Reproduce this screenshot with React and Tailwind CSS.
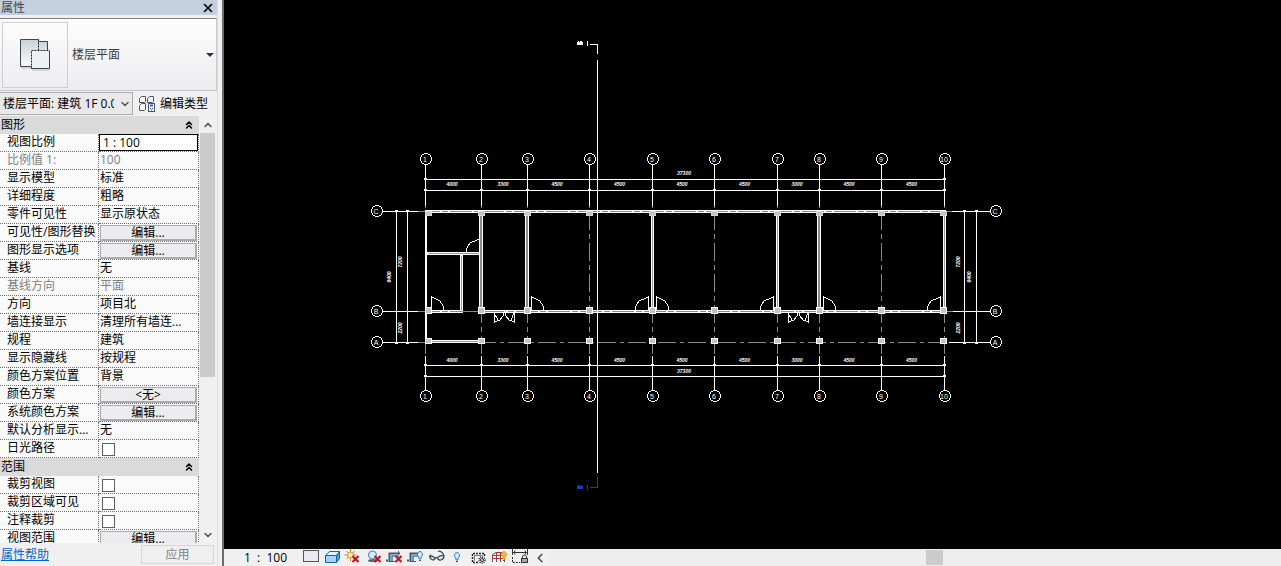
import { useState } from 'react';
import { ChevronDown, ChevronLeft, ChevronUp, ChevronsUp, X } from 'lucide-react';

const SECTIONS = [
  {
    title: '图形',
    rows: [
      { label: '视图比例', type: 'input', value: '1 : 100' },
      { label: '比例值 1:', value: '100', muted: true },
      { label: '显示模型', value: '标准' },
      { label: '详细程度', value: '粗略' },
      { label: '零件可见性', value: '显示原状态' },
      { label: '可见性/图形替换', type: 'button', value: '编辑...' },
      { label: '图形显示选项', type: 'button', value: '编辑...' },
      { label: '基线', value: '无' },
      { label: '基线方向', value: '平面', muted: true },
      { label: '方向', value: '项目北' },
      { label: '墙连接显示', value: '清理所有墙连...' },
      { label: '规程', value: '建筑' },
      { label: '显示隐藏线', value: '按规程' },
      { label: '颜色方案位置', value: '背景' },
      { label: '颜色方案', type: 'button', value: '<无>' },
      { label: '系统颜色方案', type: 'button', value: '编辑...' },
      { label: '默认分析显示...', value: '无' },
      { label: '日光路径', type: 'checkbox' },
    ],
  },
  {
    title: '范围',
    rows: [
      { label: '裁剪视图', type: 'checkbox' },
      { label: '裁剪区域可见', type: 'checkbox' },
      { label: '注释裁剪', type: 'checkbox' },
      { label: '视图范围', type: 'button', value: '编辑...' },
    ],
  },
];

// Vertical grid axes and the bay widths between them (mm)
const AXES = [425, 481, 527, 589, 652, 714, 777, 819, 881, 944];
const BAYS = ['4000', '3300', '4500', '4500', '4500', '4500', '3000', '4500', '4500'];

// Horizontal grid axes
const ROWS = [
  { name: 'C', y: 211 },
  { name: 'B', y: 311 },
  { name: 'A', y: 342 },
];

// Single doors: hinge x, bottom y, swing direction
const DOORS = [
  { x: 479, y: 252, dir: -1 },
  { x: 431, y: 310, dir: 1 },
  { x: 531, y: 310, dir: 1 },
  { x: 648, y: 310, dir: -1 },
  { x: 656, y: 310, dir: 1 },
  { x: 773, y: 310, dir: -1 },
  { x: 823, y: 310, dir: 1 },
  { x: 940, y: 310, dir: -1 },
];

const PropertyValue = ({ id, row }) => {
  const [checked, setChecked] = useState(false);
  const [text, setText] = useState(row.value || '');

  if (row.type === 'input') {
    return (
      <input
        id={id}
        type="text"
        value={text}
        onChange={(e) => setText(e.target.value)}
        className="block h-[17px] w-full border border-black bg-white px-[3px] outline-none"
      />
    );
  }
  if (row.type === 'button') {
    return (
      <button
        id={id}
        type="button"
        className="mx-px mt-px block h-4 w-[97px] border border-r-2 border-b-2 border-[#aaaab0] bg-[#ececee] text-center leading-[14px]"
      >
        {row.value}
      </button>
    );
  }
  if (row.type === 'checkbox') {
    return (
      <input
        id={id}
        type="checkbox"
        checked={checked}
        onChange={(e) => setChecked(e.target.checked)}
        className="mt-[3px] ml-[3px] block size-[13px] appearance-none border border-[#606060] bg-white checked:bg-[#606060]"
      />
    );
  }
  return <span className="pl-px">{row.value}</span>;
};

const PropertyTable = () => (
  <table className="w-[199px] table-fixed border-separate border-spacing-0 bg-[#fafafa]">
    <colgroup>
      <col className="w-[99px]" />
      <col />
    </colgroup>
    {SECTIONS.map((section) => (
      <tbody key={section.title}>
        <tr>
          <th colSpan={2} className="h-[18px] bg-[#dadada] p-0 text-left font-normal">
            <div className="flex h-[18px] items-center justify-between pr-1 pl-px">
              {section.title}
              <ChevronsUp size={12} strokeWidth={3} />
            </div>
          </th>
        </tr>
        {section.rows.map((row, i) => {
          const id = `${section.title}-${i}`;
          return (
            <tr key={id} className={row.muted ? 'text-[#808080]' : 'text-black'}>
              <td className="h-[18px] border-r border-b border-dotted border-[#707070] p-0 pl-[7px] align-top leading-4 whitespace-nowrap">
                <label htmlFor={row.type ? id : undefined}>{row.label}</label>
              </td>
              <td className="h-[18px] border-r border-b border-dotted border-[#707070] p-0 align-top leading-4 whitespace-nowrap">
                <PropertyValue id={id} row={row} />
              </td>
            </tr>
          );
        })}
      </tbody>
    ))}
  </table>
);

const FloorPlanIcon = () => (
  <svg width="66" height="66" viewBox="1 1 66 66">
    <defs>
      <linearGradient id="sheet" x1="0" y1="0" x2="0" y2="1">
        <stop offset="0" stopColor="#c9d0d8" />
        <stop offset="1" stopColor="#ffffff" />
      </linearGradient>
    </defs>
    <path d="M18.500 17.500H36.500V19.500H45.500V46.500H29.500V44.500H18.500Z" fill="url(#sheet)" stroke="#3c4650" />
    <path d="M29.500 28.500H47.500V46.500H29.500Z" fill="#eef1f4" />
    <path d="M36.500 17.500V28.500M29.500 46.500V28.500H47.500" fill="none" stroke="#222" strokeDasharray="2 1" />
    <path d="M47.500 28.500V46.500H29.500" fill="none" stroke="#3c4650" />
    <path d="M19 46H29M30 48H48" stroke="#b8bcc2" />
  </svg>
);

const EditTypeIcon = () => (
  <svg width="17" height="17" viewBox="0 0 17 17" fill="#f4f6f8" stroke="#4a5866">
    <path d="M0.500 3.500L2.500 1.500H6.500V6.500L5.500 7.500H0.500ZM8.500 3.500L10.500 1.500H14.500V6.500L13.500 7.500H8.500ZM0.500 10.500L2.500 8.500H6.500V14.500L5.500 15.500H0.500Z" />
    <rect x="9.500" y="8.500" width="6" height="8" fill="#fff" />
    <path d="M11 10.500H14" stroke="#2968c0" strokeWidth="2" />
    <path d="M11 13.500H12M13 13.500H14M12 15H13" stroke="#174ea0" />
  </svg>
);

const RedCross = ({ x, y }) => (
  <path d={`M${x - 3} ${y - 3}L${x + 3} ${y + 3}M${x + 3} ${y - 3}L${x - 3} ${y + 3}`} stroke="#c81420" strokeWidth="2.200" />
);

const Bulb = ({ x, y, fill = '#d9efff', stroke = '#2c7fd0' }) => (
  <g>
    <path d={`M${x - 1} ${y + 4}V${y + 2}A2.500 2.800 0 1 1 ${x + 1} ${y + 2}V${y + 4}Z`} fill={fill} stroke={stroke} />
    <path d={`M${x - 1} ${y + 5.500}H${x + 1}`} stroke="#555" />
  </g>
);

const CropFrame = () => (
  <g>
    <path d="M2.500 13V4.500H13M-1 11.500H1" stroke="#4a5866" strokeWidth="2" />
    <path d="M5 12V7H12" stroke="#2c7fd0" strokeWidth="1.500" />
    <path d="M3 12.500H8M11.500 2V5" stroke="#4a5866" />
  </g>
);

const VIEW_TOOLS = [
  {
    name: '详细程度',
    art: <rect x="0.500" y="1.500" width="15" height="11" fill="#e9eaf0" stroke="#555" />,
  },
  {
    name: '视觉样式',
    art: (
      <g stroke="#1763a6">
        <path d="M1.500 6.500L5.500 2.500H15.500L12.500 6.500Z" fill="#e2f3ff" />
        <path d="M12.500 6.500L15.500 2.500V9.500L12.500 13.500Z" fill="#4f9bd6" />
        <path d="M1.500 6.500H12.500V13.500H1.500Z" fill="#a4d3f5" />
      </g>
    ),
  },
  {
    name: '日光路径',
    art: (
      <g>
        <path d="M5.500 0V12M-0.500 6H11.500M1.500 2L9.500 10M9.500 2L1.500 10" stroke="#c98a1c" />
        <circle cx="5.500" cy="6" r="3" fill="#ffe79c" stroke="#d9971e" />
        <RedCross x={10.500} y={10} />
      </g>
    ),
  },
  {
    name: '阴影',
    art: (
      <g>
        <ellipse cx="7" cy="11.500" rx="5" ry="1.500" fill="#5c6670" />
        <circle cx="6.500" cy="6" r="4" fill="#d6ecfc" stroke="#3a83c4" />
        <RedCross x={11.500} y={10} />
      </g>
    ),
  },
  {
    name: '裁剪视图',
    art: (
      <g>
        <CropFrame />
        <RedCross x={11.500} y={10} />
      </g>
    ),
  },
  {
    name: '显示裁剪区域',
    art: (
      <g>
        <CropFrame />
        <Bulb x={12} y={6} />
      </g>
    ),
  },
  {
    name: '临时隐藏/隔离',
    art: (
      <g stroke="#35424e" strokeWidth="1.200">
        <path d="M0.500 7.500L2 5.500M9 2.500C11 1.500 14 3.500 15 7M5.500 10C6.500 8.500 7.500 8.500 8.500 9" />
        <path d="M0.500 7.500C2 6.500 5 7.500 6 9.500C5.500 12 1.500 11 0.500 7.500Z" fill="#e8edf2" />
        <path d="M8.500 9C9.500 7 13 6 15 7C15 10.500 10 13 8.500 9Z" fill="#e8edf2" />
      </g>
    ),
  },
  { name: '显示隐藏的图元', art: <Bulb x={7} y={7} /> },
  {
    name: '临时视图属性',
    art: (
      <g stroke="#222">
        <path d="M7 13.500H1.500V4.500H13.500V7" strokeWidth="1.500" strokeDasharray="2 1" />
        <path d="M3.500 11.500V6.500H11.500" stroke="#777" />
        <circle cx="11" cy="11" r="3" strokeDasharray="1 1" strokeWidth="1.500" />
        <circle cx="11" cy="11" r="1.500" fill="#fff" />
      </g>
    ),
  },
  {
    name: '分析模型',
    art: (
      <g>
        <path d="M0.500 13V5.500L4 3.500H10M4.500 13V7M8.500 13V7M12.500 13V9" stroke="#555" />
        <path d="M0.500 6.500H9M4.500 3V7M8.500 3V7M0 9.500H12" stroke="#c22a2a" />
        <Bulb x={12} y={6} fill="#ffb52e" stroke="#f0a020" />
      </g>
    ),
  },
  {
    name: '显示约束',
    art: (
      <g stroke="#333">
        <path d="M-0.500 0V6M14.500 0V6M0 3.500H14M2.500 1.500L0.500 3.500L2.500 5.500M11.500 1.500L13.500 3.500L11.500 5.500" />
        <path d="M-0.500 8V14M0 13.500H7" strokeDasharray="2 1" />
        <path d="M9.500 9V8A2 2 0 0 1 13.500 8V9" />
        <rect x="8.500" y="9.500" width="6" height="4" fill="#aaa" />
      </g>
    ),
  },
];

const AxisBubble = ({ x, y, name }) => (
  <g>
    <circle cx={x} cy={y} r="5.500" fill="none" stroke="#fff" />
    <text x={x - 1} y={y + 3} textAnchor="middle" fontSize="7">
      {name}
    </text>
  </g>
);

// Dimension strings above or below the plan
const HorizontalDimensions = ({ inner, outer, innerText, outerText }) => (
  <g>
    <path d={`M425 ${inner}.500H945M425 ${outer}.500H945`} stroke="#fff" />
    {AXES.map((x) => (
      <rect key={x} x={x - 1} y={inner - 1} width="3" height="2" />
    ))}
    <rect x="424" y={outer - 1} width="3" height="2" />
    <rect x="943" y={outer - 1} width="3" height="2" />
    {BAYS.map((bay, i) => (
      <text key={AXES[i]} x={(AXES[i] + AXES[i + 1]) / 2 - 1} y={innerText} textAnchor="middle">
        {bay}
      </text>
    ))}
    <text x="684" y={outerText} textAnchor="middle">
      37300
    </text>
  </g>
);

const VerticalText = ({ x, y, children }) => (
  <text transform={`translate(${x} ${y}) rotate(-90)`} textAnchor="middle">
    {children}
  </text>
);

const VerticalDimensions = ({ lines, near, far }) => (
  <g>
    {lines.map((x) => (
      <g key={x}>
        <path d={`M${x}.500 211V342`} stroke="#fff" />
        <rect x={x - 1} y="210" width="3" height="2" />
        <rect x={x - 1} y="342" width="3" height="2" />
      </g>
    ))}
    <VerticalText x={near} y={262}>7200</VerticalText>
    <VerticalText x={near} y={328}>2200</VerticalText>
    <VerticalText x={far} y={277}>9400</VerticalText>
  </g>
);

const Walls = () => (
  <g fill="none">
    <path
      d="M425 211.500H946M425 311.500H463M480 311.500H946M652.500 211V311M777.500 211V311M944.500 211V311M426 253.500H480M425 341.500H484M461.500 254V311"
      stroke="#fff"
      strokeWidth="3"
    />
    <path d="M426 211V343" stroke="#fff" strokeWidth="2" />
    <path d="M481 211V311M527 211V311M819 211V311" stroke="#fff" strokeWidth="4" />
    <path d="M481 213V310M527 213V310M819 213V310" stroke="#8a8a8a" strokeWidth="2" />
    <path
      d="M427 341.500H480M428 253.500H479M652.500 213V310M777.500 213V310M944.500 213V310M461.500 256V310"
      stroke="#9a9a9a"
    />
    <path d="M418 211.500H953M418 311.500H463M484 311.500H953" stroke="#8a8a8a" strokeDasharray="22 2 6 2" />
  </g>
);

const Columns = () =>
  AXES.map((x, i) => {
    const left = i === 0 ? x : i === AXES.length - 1 ? x - 4 : x - 3;
    return (
      <g key={x} fill="#c4c4c4" stroke="#fff">
        <rect x={left + 0.500} y="211.500" width="6" height="4" stroke="#d8d8d8" />
        <rect x={left + 0.500} y="307.500" width="6" height="6" />
        <rect x={left + 0.500} y="338.500" width="6" height="5" />
      </g>
    );
  });

const Doors = () => (
  <g fill="none" stroke="#fff">
    {DOORS.map(({ x, y, dir }) => (
      <path
        key={`${x}-${y}`}
        d={`M${x + 0.500} ${y}V${y - 13}L${x + dir * 9} ${y - 9}L${x + dir * 12} ${y - 4}L${x + dir * 13} ${y}`}
      />
    ))}
    {[494, 788].map((x) => (
      <path
        key={x}
        d={`M${x}.500 312V322L${x + 6} 320L${x + 9} 316L${x + 10}.500 312L${x + 12} 316L${x + 15} 320L${x + 20}.500 322V312M${x} 313L${x + 4} 320M${x + 20} 313L${x + 17} 320`}
      />
    ))}
  </g>
);

const Drawing = () => (
  <svg
    width="1057"
    height="549"
    viewBox="224 0 1057 549"
    className="block shrink-0 font-['Liberation_Sans'] text-[5px] font-bold italic"
    fill="#fff"
    shapeRendering="crispEdges"
  >
    <g fill="none">
      {AXES.map((x) => (
        <g key={x}>
          <path d={`M${x}.500 165V206M${x}.500 356V390`} stroke="#fff" />
          <path d={`M${x}.500 206V356`} stroke="#8a8a8a" strokeDasharray="18 4 5 4" strokeDashoffset="-6" />
        </g>
      ))}
      {ROWS.map(({ y }) => (
        <path key={y} d={`M382 ${y}.500H418M949 ${y}.500H991`} stroke="#fff" />
      ))}
      <path d="M418 342.500H949M463 311.500H481" stroke="#8a8a8a" strokeDasharray="18 4 4 4" />
    </g>

    <Walls />
    <Columns />
    <Doors />

    <HorizontalDimensions inner={190} outer={179} innerText={186} outerText={175} />
    <HorizontalDimensions inner={365} outer={376} innerText={362} outerText={373} />
    <VerticalDimensions lines={[396, 407]} near={402} far={391} />
    <VerticalDimensions lines={[964, 976]} near={960} far={971} />

    <g className="font-normal not-italic">
      {AXES.map((x, i) => (
        <g key={x}>
          <AxisBubble x={x + 1} y={159} name={i + 1} />
          <AxisBubble x={x + 1} y={396} name={i + 1} />
        </g>
      ))}
      {ROWS.map(({ name, y }) => (
        <g key={name}>
          <AxisBubble x={377} y={y} name={name} />
          <AxisBubble x={996} y={y} name={name} />
        </g>
      ))}
    </g>

    {/* Section line */}
    <path d="M597.500 60V473M590 44.500H597.500V54M587.500 41V46" fill="none" stroke="#fff" />
    <path d="M597.500 477V487.500H590M587.500 485V490" fill="none" stroke="#0f43b4" />
    <path d="M577 45V42H578V41H579V42H580V41H582V42H583V45Z" />
    <path d="M577 489V486H578V485H580V486H581V485H582V486H583V489Z" fill="#0f43b4" />
  </svg>
);

const PropertiesPanel = () => (
  <aside className="flex h-full w-[224px] shrink-0 border-r-2 border-[#6c6c6c] bg-[#f0f0f0]">
    <div className="flex w-[218px] flex-col border-r border-[#dcdcdc]">
      <header className="flex h-[15px] shrink-0 items-center justify-between bg-[#c4d0df] pr-0.5 pl-px text-[#3c4650]">
        <h1>属性</h1>
        <button type="button" aria-label="关闭" className="text-black">
          <X size={14} strokeWidth={3} />
        </button>
      </header>

      <button
        type="button"
        className="mt-[3px] flex h-[73px] shrink-0 items-center border-t border-r border-b border-[#c8c8cc] border-t-[#808080] bg-linear-to-b from-[#fdfdfd] to-[#ededf0] pl-0.5 text-left text-[#3a3a3a]"
      >
        <span className="border border-[#cdcdd2]">
          <span className="block size-16 overflow-hidden">
            <FloorPlanIcon />
          </span>
        </span>
        <span className="flex-1 pl-1">楼层平面</span>
        <svg width="12" height="6" viewBox="0 0 12 6">
          <path d="M2 1H10L6 5Z" fill="#333" />
        </svg>
      </button>

      <div className="flex h-[25px] shrink-0 items-center">
        <div className="relative w-[133px]">
          <select
            aria-label="视图"
            className="block h-[23px] w-full appearance-none overflow-hidden border border-l-0 border-[#acacac] bg-[#e9e9ec] pr-[18px] pl-[3px] text-black"
          >
            <option>楼层平面: 建筑 1F 0.00</option>
          </select>
          <ChevronDown size={12} strokeWidth={3} className="pointer-events-none absolute top-1.5 right-0.5 text-[#555]" />
        </div>
        <button type="button" className="ml-1.5 flex items-center gap-1 text-black">
          <EditTypeIcon />
          编辑类型
        </button>
      </div>

      <div className="flex min-h-0 flex-1 overflow-hidden">
        <PropertyTable />
        <div className="ml-px flex h-full w-[15px] flex-col items-center text-[#505050]">
          <div className="flex h-[17px] shrink-0 items-center">
            <ChevronUp size={12} strokeWidth={3} />
          </div>
          <div className="flex w-full flex-1 flex-col">
            <div className="h-[62%] w-full bg-[#cbcbcb]" />
          </div>
          <div className="flex h-[17px] shrink-0 items-center">
            <ChevronDown size={12} strokeWidth={3} />
          </div>
        </div>
      </div>

      <footer className="flex h-[23px] shrink-0 items-center justify-between pr-[3px] pl-px">
        <a href="#help" className="text-[#0066cc] underline">
          属性帮助
        </a>
        <button type="button" disabled className="h-[19px] w-[73px] border border-[#d4d4d4] bg-[#efefef] leading-4 text-[#838383]">
          应用
        </button>
      </footer>
    </div>
  </aside>
);

const ViewControlBar = () => (
  <footer className="flex h-[17px] shrink-0 items-center bg-[#f0f0f0] text-black">
    <button type="button" className="w-[79px] pl-5 text-left whitespace-pre">
      {'1  :  100'}
    </button>
    <div className="flex gap-[5px]">
      {VIEW_TOOLS.map((tool) => (
        <button key={tool.name} type="button" aria-label={tool.name}>
          <svg width="16" height="17" viewBox="0 0 16 17" fill="none" className="block overflow-visible">
            {tool.art}
          </svg>
        </button>
      ))}
    </div>
    <button type="button" aria-label="向左滚动" className="ml-1 text-[#505050]">
      <ChevronLeft size={14} strokeWidth={3} />
    </button>
    <div className="flex h-full flex-1 items-center bg-[#eeeeee]">
      <div className="ml-[51.6%] h-[15px] w-[17px] bg-[#cbcbcb]" />
    </div>
  </footer>
);

const App = () => (
  <div className="flex h-screen w-full overflow-hidden bg-black font-['Open_Sans','Noto_Sans_CJK_SC',sans-serif] text-xs leading-4">
    <PropertiesPanel />
    <main className="flex min-w-0 flex-1 flex-col">
      <div className="flex min-h-0 flex-1 overflow-hidden bg-black">
        <Drawing />
      </div>
      <ViewControlBar />
    </main>
  </div>
);

export default App;
